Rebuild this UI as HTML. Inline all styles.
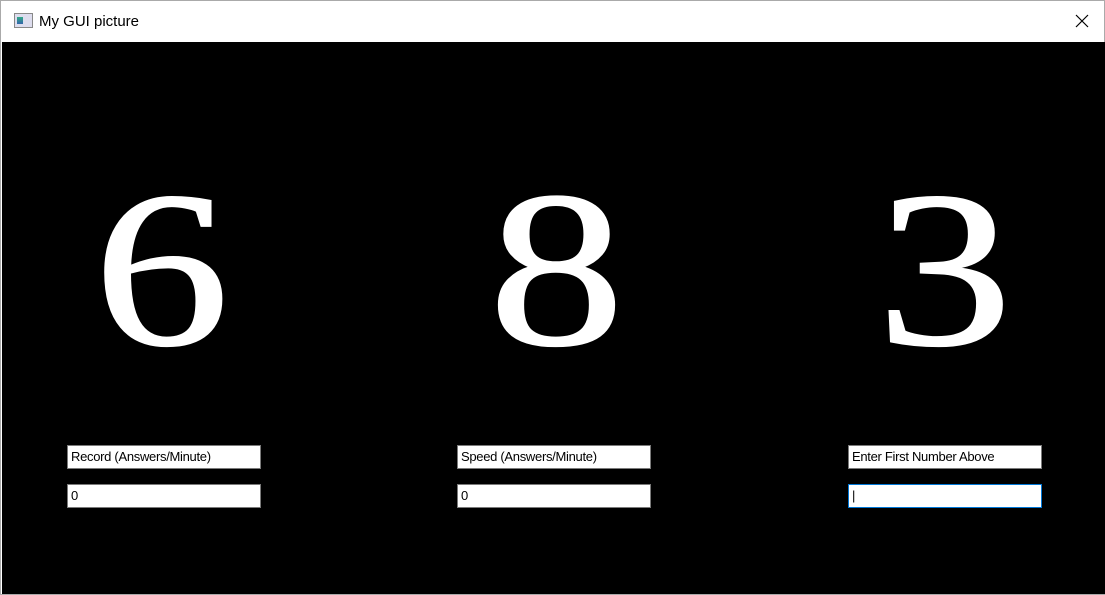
<!DOCTYPE html>
<html><head><style>
html,body{margin:0;padding:0;}
body{width:1105px;height:595px;position:relative;overflow:hidden;background:#fff;font-family:"Liberation Sans",sans-serif;}
.win{position:absolute;left:0;top:0;width:1103px;height:593px;border:1px solid #aaa;}
.title{position:absolute;left:0;top:0;width:1103px;height:40px;background:#fff;}
.title .t{position:absolute;left:38px;top:12px;font-size:15px;color:#000;}
.icon{position:absolute;left:13px;top:12px;width:17px;height:13px;border:1px solid #888;background:#dde;}
.icon i{position:absolute;left:2px;top:3px;width:6px;height:7px;background:linear-gradient(#3a8,#36a);}
.close{position:absolute;left:1074px;top:13px;}
.canvas{position:absolute;left:1px;top:41px;width:1103px;height:552px;background:#000;}
.d{position:absolute;top:0;width:300px;text-align:center;color:#fff;font-family:"Liberation Serif",serif;font-size:222px;line-height:1;-webkit-text-stroke:2px #fff;}
.d span{display:inline-block;transform:scaleX(1.22);}
.box{position:absolute;background:#fff;border:1px solid #7a7a7a;font-size:13px;line-height:22px;padding-left:3px;box-sizing:border-box;width:194px;height:24px;color:#000;letter-spacing:-0.3px;}
</style></head><body>
<div class="win">
<div class="title"><div class="icon"><i></i></div><div class="t">My GUI picture</div>
<svg class="close" width="14" height="14" viewBox="0 0 14 14"><path d="M1 1L13 13M13 1L1 13" stroke="#000" stroke-width="1.2"/></svg></div>
<div class="canvas">
<div class="d" style="left:9px;top:117px"><span>6</span></div>
<div class="d" style="left:404px;top:117px"><span>8</span></div>
<div class="d" style="left:792px;top:117px"><span>3</span></div>
</div>
<div class="box" style="left:66px;top:444px">Record (Answers/Minute)</div>
<div class="box" style="left:66px;top:483px">0</div>
<div class="box" style="left:456px;top:444px">Speed (Answers/Minute)</div>
<div class="box" style="left:456px;top:483px">0</div>
<div class="box" style="left:847px;top:444px">Enter First Number Above</div>
<div class="box" style="left:847px;top:483px;border-color:#0078d7">|</div>
</div>
</body></html>
